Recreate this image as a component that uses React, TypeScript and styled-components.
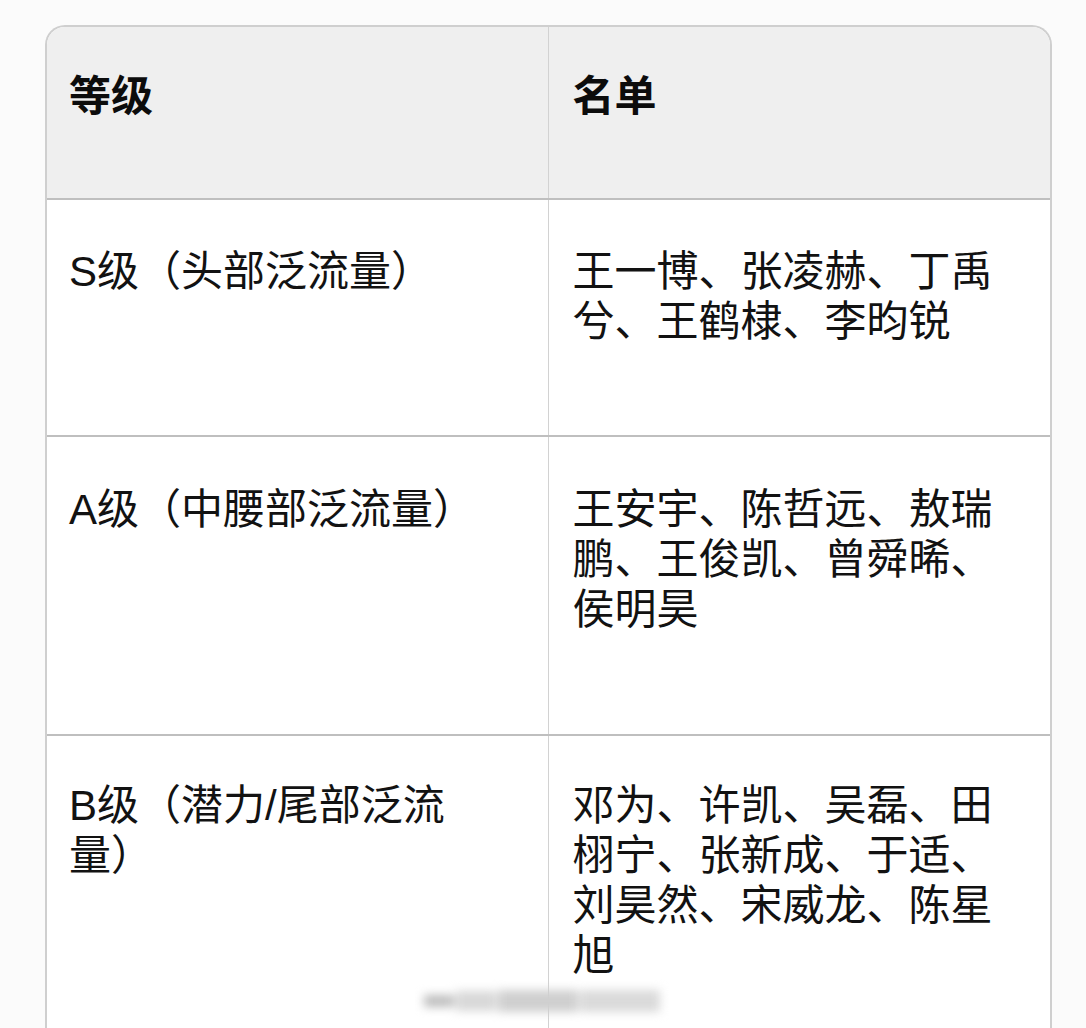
import React from "react";
import styled, { createGlobalStyle } from "styled-components";

const Global = createGlobalStyle`
  html, body { margin: 0; padding: 0; background: #fbfbfb; overflow: hidden; }
  #root { height: 1028px; }
`;

const Page = styled.div`
  position: relative;
  height: 1028px;
  box-sizing: border-box;
  padding: 25px 0 0 45px;
  font-family: "Liberation Sans", "Noto Sans CJK SC", sans-serif;
  color: #151515;
  text-spacing-trim: space-all;
  font-feature-settings: "chws" 0, "halt" 0;
`;

const Table = styled.div`
  width: 1007px;
  box-sizing: border-box;
  border: 2px solid #cfcfcf;
  border-bottom: none;
  border-radius: 20px 20px 0 0;
  overflow: hidden;
  background: #fff;
  display: flex;
  flex-direction: column;
`;

const Row = styled.div<{ $h: number; $head?: boolean }>`
  display: grid;
  grid-template-columns: 1fr 1fr;
  height: ${(p) => p.$h}px;
  flex: none;
  box-sizing: border-box;
  border-bottom: 2px solid #bfbfbf;
  background: ${(p) => (p.$head ? "#efefef" : "#ffffff")};
  font-weight: ${(p) => (p.$head ? 700 : 400)};
  color: ${(p) => (p.$head ? "#0c0c0c" : "#121212")};
`;

const Cell = styled.div<{ $pt: number }>`
  box-sizing: border-box;
  padding: ${(p) => p.$pt}px 24px 0 22px;
  font-size: 42px;
  line-height: 50px;
  &:first-child {
    border-right: 1px solid #d2d2d2;
  }
  &:last-child {
    padding-left: 24px;
  }
`;

const Watermark = styled.div`
  position: absolute;
  left: 424px;
  top: 989px;
  width: 236px;
  height: 24px;
  display: flex;
  align-items: center;
  gap: 2px;
  filter: blur(5px);
`;

const Smudge = styled.span<{ $w: number; $c: string; $hh: number }>`
  display: block;
  width: ${(p) => p.$w}px;
  height: ${(p) => p.$hh}px;
  background: ${(p) => p.$c};
`;

const rows = [
  { h: 173, pt: 45, left: "等级", right: "名单", head: true },
  {
    h: 237,
    pt: 47,
    left: "S级（头部泛流量）",
    right: "王一博、张凌赫、丁禹兮、王鹤棣、李昀锐",
  },
  {
    h: 299,
    pt: 48,
    left: "A级（中腰部泛流量）",
    right: "王安宇、陈哲远、敖瑞鹏、王俊凯、曾舜晞、侯明昊",
  },
  {
    h: 320,
    pt: 45,
    left: "B级（潜力/尾部泛流量）",
    right: "邓为、许凯、吴磊、田栩宁、张新成、于适、刘昊然、宋威龙、陈星旭",
  },
];

export default function App() {
  return (
    <>
      <Global />
      <Page lang="zh-CN">
        <Table>
          {rows.map((r, i) => (
            <Row key={i} $h={r.h} $head={r.head}>
              <Cell $pt={r.pt}>{r.left}</Cell>
              <Cell $pt={r.pt}>{r.right}</Cell>
            </Row>
          ))}
        </Table>
        <Watermark>
          <Smudge $w={30} $hh={12} $c="#bdbdbd" />
          <Smudge $w={40} $hh={20} $c="#d8d8d8" />
          <Smudge $w={80} $hh={22} $c="#cfcfcf" />
          <Smudge $w={80} $hh={22} $c="#dadada" />
        </Watermark>
      </Page>
    </>
  );
}
